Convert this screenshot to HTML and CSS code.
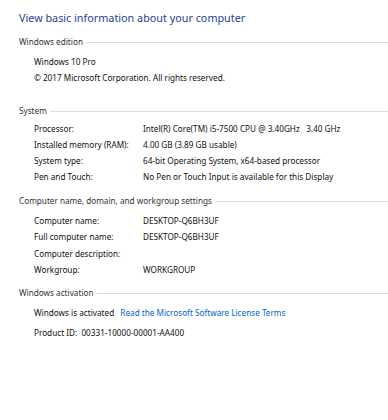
FILE: index.html
```html
<!DOCTYPE html>
<html>
<head>
<meta charset="utf-8">
<link rel="stylesheet" href="styles.css">
</head>
<body>
<div class="page">
  <h1 class="title">View basic information about your computer</h1>

  <section class="sec sec-edition">
    <div class="sec-head"><span class="sec-label">Windows edition</span><span class="sec-line"></span></div>
    <div class="plain first">Windows 10 Pro</div>
    <div class="plain">© 2017 Microsoft Corporation. All rights reserved.</div>
  </section>

  <section class="sec sec-system">
    <div class="sec-head"><span class="sec-label">System</span><span class="sec-line"></span></div>
    <div class="grid">
      <div>Processor:</div><div>Intel(R) Core(TM) i5-7500 CPU @ 3.40GHz &nbsp; 3.40 GHz</div>
      <div>Installed memory (RAM):</div><div>4.00 GB (3.89 GB usable)</div>
      <div>System type:</div><div>64-bit Operating System, x64-based processor</div>
      <div>Pen and Touch:</div><div>No Pen or Touch Input is available for this Display</div>
    </div>
  </section>

  <section class="sec sec-name">
    <div class="sec-head"><span class="sec-label">Computer name, domain, and workgroup settings</span><span class="sec-line"></span></div>
    <div class="grid grid-name">
      <div>Computer name:</div><div>DESKTOP-Q6BH3UF</div>
      <div>Full computer name:</div><div>DESKTOP-Q6BH3UF</div>
      <div>Computer description:</div><div></div>
      <div>Workgroup:</div><div>WORKGROUP</div>
    </div>
  </section>

  <section class="sec sec-act">
    <div class="sec-head"><span class="sec-label">Windows activation</span><span class="sec-line"></span></div>
    <div class="plain act-row">Windows is activated <a class="link" href="#">Read the Microsoft Software License Terms</a></div>
    <div class="plain pid">Product ID: &nbsp;00331-10000-00001-AA400</div>
  </section>
</div>
</body>
</html>
```

FILE: styles.css
```css
html, body {
  margin: 0;
  padding: 0;
  background: #ffffff;
}
body {
  font-family: "Noto Sans", "Open Sans", sans-serif;
  font-size: 8.2px;
  color: #111111;
}
.page {
  padding: 8px 0 0 19px;
}
.title {
  margin: 0;
  font-size: 10.8px;
  font-weight: normal;
  line-height: 20px;
  color: #1f3f99;
}
.sec-head {
  display: flex;
  align-items: center;
  height: 16px;
  line-height: 16px;
  color: #333333;
}
.sec-line {
  flex: 1;
  height: 1px;
  background: #dcdcdc;
  margin-left: 3px;
  margin-top: 1px;
}
.plain {
  line-height: 16px;
  padding-left: 15px;
  white-space: nowrap;
}
.grid {
  display: grid;
  grid-template-columns: 109px 1fr;
  grid-auto-rows: 16px;
  line-height: 16px;
  padding-left: 15px;
  margin-top: 2px;
  white-space: nowrap;
}
.grid-name {
  grid-auto-rows: 16.4px;
  margin-top: 4px;
}
.sec-edition { margin-top: 6px; }
.plain.first { margin-top: 4px; }
.sec-system { margin-top: 17px; }
.sec-name { margin-top: 8px; }
.sec-act { margin-top: 6px; }
.act-row { margin-top: 4px; }
.link {
  color: #0066cc;
  text-decoration: none;
  margin-left: 4px;
}
.pid { margin-top: 4px; }
```
